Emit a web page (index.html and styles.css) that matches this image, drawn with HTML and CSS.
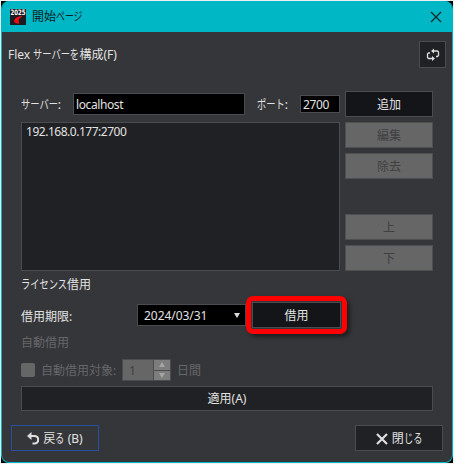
FILE: index.html
```html
<!DOCTYPE html>
<html lang="ja">
<head>
<meta charset="utf-8">
<title>開始ページ</title>
<link rel="stylesheet" href="styles.css">
</head>
<body>
<div class="desktop">
<main class="window">
  <header class="titlebar">
    <svg class="logo" width="16" height="16" viewBox="0 0 16 16"><rect width="16" height="16" fill="#1c1d20"/><path d="M4 11.500C5 9 7.500 7.300 12.500 7.200L9.500 9.500 8.500 11.500 9.500 14.500H7C5 14 4 13 4 11.500z"/><text class="logo-year" x="0.500" y="6" textLength="15" lengthAdjust="spacingAndGlyphs">2025</text></svg>
    <h1>開始<span class="kana k3">ページ</span></h1>
    <svg class="close" width="12" height="12" viewBox="0 0 12 12"><path d="M1 1l10 10M11 1L1 11"/></svg>
  </header>
  <div class="heading">
    <span class="latin">Flex <span class="kana k5">サーバーを</span>構成(F)</span>
    <button class="refresh"><svg width="14" height="14" viewBox="0 0 14 14"><path d="M10 8.500h1.500l1-1V4l-1-1H7M4 5H2.500l-1 1v3.500l1 1H7"/><path class="solid" d="M8 .5v5L5 3zM6 8v5l3-2.500z"/></svg></button>
  </div>
  <section class="servers">
    <div class="server-row">
      <label class="server-label"><span class="kana k4">サーバー</span>:</label>
      <div class="field host">localhost</div>
      <label class="port-label"><span class="kana k3">ポート</span>:</label>
      <div class="field port">2700</div>
      <button class="btn dark">追加</button>
    </div>
    <div class="list-row">
      <div class="list">192.168.0.177:2700</div>
      <div class="side">
        <button class="btn off">編集</button>
        <button class="btn off">除去</button>
        <button class="btn off up">上</button>
        <button class="btn off">下</button>
      </div>
    </div>
  </section>
  <section class="borrow">
    <h2><span class="kana k5">ライセンス</span>借用</h2>
    <div class="date-row">
      <label>借用期限:</label>
      <div class="field date">2024/03/31<i class="down"></i></div>
      <div class="highlight"><button class="btn dark">借用</button></div>
    </div>
    <h3>自動借用</h3>
    <div class="auto-row">
      <i class="check"></i><label>自動借用対象:</label>
      <div class="spinner"><b>1</b><div class="steps"><span><i class="up-arrow"></i></span><span><i class="down"></i></span></div></div>
      <span class="days">日間</span>
    </div>
    <button class="btn apply">適用(A)</button>
  </section>
  <footer>
    <button class="btn back"><svg width="12" height="13" viewBox="0 0 12 13"><path d="M2 4h5.500a3.300 3.300 0 0 1 0 7.500H5.500"/><path class="solid" d="M4.500 0v8L0 4z"/></svg>戻<span class="kana k1">る</span> (B)</button>
    <button class="btn"><svg width="12" height="12" viewBox="0 0 12 12"><path d="M1 1l10 10M11 1L1 11"/></svg>閉<span class="kana k2">じる</span></button>
  </footer>
</main>
</div>
</body>
</html>
```
FILE: styles.css
```css
* { box-sizing: border-box; }
body {
  margin: 0;
  background: #e4ece8;
  color: #e2e2e2;
  font: 12px/16px "Noto Sans", "Noto Sans CJK JP", sans-serif;
}
h1, h2, h3 { margin: 0; font-size: 12px; font-weight: 400; }
button { font: inherit; color: inherit; padding: 0; margin: 0; }
.desktop { width: 454px; height: 464px; padding: 1px; background: #000; box-shadow: inset 0 0 0 1px #edf1ef; }
.window {
  width: 452px;
  height: 462px;
  border: 1px solid #00b7c6;
  border-top: 0;
  border-radius: 8px;
  background: #353639;
  overflow: hidden;
}
.titlebar {
  height: 31px;
  display: flex;
  align-items: center;
  padding: 0 10px 0 8px;
  background: #00b7c6;
  color: #081c1e;
}
.logo { margin-right: 6px; overflow: visible; }
.logo-year { font: bold 7.5px "DejaVu Sans", sans-serif; fill: #fff; }
.close { margin-left: auto; fill: none; }
.kana { display: inline-block; transform: scaleX(.77); transform-origin: left; white-space: nowrap; }
.k1 { margin-right: -.23em; }
.k2 { margin-right: -.46em; }
.k3 { margin-right: -.69em; }
.k4 { margin-right: -.92em; }
.k5 { margin-right: -1.15em; }
.titlebar h1 { padding-top: 1px; }
.titlebar .kana { transform: scaleX(.74); }
.heading {
  height: 59px;
  padding: 9px 6px 0;
  display: flex;
  justify-content: space-between;
}
.latin { padding-top: 6px; }
.refresh {
  width: 27px;
  height: 27px;
  display: grid;
  place-items: center;
  background: #202124;
  border: 1px solid #4b4c4f;
}
svg path { fill: none; stroke: #dedede; stroke-width: 1.3; }
.logo path { fill: #f00c14; stroke: none; }
.close path { stroke: #08282b; }
svg .solid { fill: #dedede; stroke: none; }
.server-row { display: flex; align-items: center; height: 26px; padding-left: 19px; }
.server-row label { padding-top: 2px; }
.field {
  height: 22px;
  border: 1px solid #4b4c4f;
  background: #000;
  line-height: 21px;
  padding-left: 2px;
  letter-spacing: -.4px;
}
.server-row .server-label { width: 52px; }
.host { width: 172px; }
.server-row .port-label { width: 55px; padding-left: 12px; }
.port { width: 40px; height: 18px; line-height: 17px; }
.btn {
  width: 88px;
  height: 26px;
  background: #202124;
  border: 1px solid #4b4c4f;
  display: flex;
  align-items: center;
  justify-content: center;
}
.side .btn, .dark { padding-top: 1px; }
.dark { background: #141519; }
.server-row .btn { margin-left: 5px; }
.list-row { display: flex; gap: 5px; padding: 5px 0 0 19px; }
.list {
  width: 319px;
  height: 149px;
  border: 1px solid #4b4c4f;
  background: #202124;
  padding: 1px 4px;
  letter-spacing: -.48px;
}
.side { display: flex; flex-direction: column; gap: 5px; }
.off { background: #666; border-color: #4e4f51; color: #3f4042; }
.up { margin-top: 30px; }
.borrow { padding: 5px 0 0 19px; }
.borrow h2 { padding-top: 1px; height: 16px; }
.date-row { display: flex; align-items: center; height: 38px; margin-top: 4px; }
.date-row label { width: 116px; padding-top: 3px; }
.date { width: 109px; display: flex; align-items: center; padding: 1px 5px 0 6px; letter-spacing: -.05px; }
.date .down { margin-left: auto; }
.down { border: 3.5px solid transparent; border-top: 5px solid #ddd; border-bottom: 0; }
.highlight {
  width: 101px;
  height: 38px;
  padding: 1px;
  border: 5px solid #f00;
  border-radius: 7px;
  box-shadow: 3px 3px 4px rgba(0, 0, 0, .45);
}
.highlight .btn { width: 89px; }
h3, .auto-row { color: #666769; }
h3 { padding-top: 1px; height: 16px; }
.auto-row { display: flex; align-items: center; height: 22px; margin-top: 9px; }
.check { width: 14px; height: 14px; border-radius: 2px; background: #666; margin-right: 6px; }
.auto-row label { width: 81px; padding-top: 2px; }
.days { padding-top: 2px; }
.spinner { width: 49px; height: 22px; display: flex; border: 1px solid #4b4c4f; background: #666; margin-right: 6px; }
.spinner b { width: 31px; padding-left: 6px; font-weight: 400; color: #3f4042; line-height: 21px; border-right: 1px solid #4b4c4f; }
.steps { flex: 1; display: grid; grid-template-rows: 1fr 1fr; gap: 1px; background: #4b4c4f; }
.steps span { display: grid; place-items: center; background: #7d7d7d; }
.steps .down { border-top-color: #a5a5a5; }
.up-arrow { border: 3.5px solid transparent; border-bottom: 5px solid #a5a5a5; border-top: 0; }
.apply { width: 412px; height: 25px; margin-top: 5px; padding-top: 1px; }
footer { display: flex; justify-content: space-between; padding: 14px 9px 0; }
footer .btn { padding-top: 1px; }
footer svg { margin-right: 4px; }
footer svg path { stroke-width: 2.2; }
.back { border-color: #2650a0; background: #353639; white-space: pre; }
```
